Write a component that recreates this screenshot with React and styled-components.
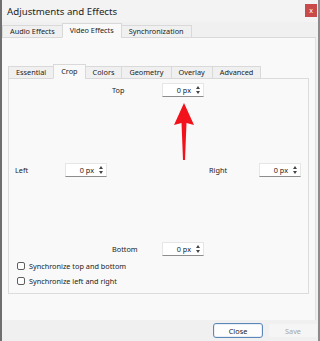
import React from "react";
import styled, { createGlobalStyle } from "styled-components";

const GlobalStyle = createGlobalStyle`
    html, body {
        margin: 0;
        padding: 0;
        background: #f0f0f0;
    }
    body {
        font-family: "Noto Sans", "Open Sans", sans-serif;
        font-size: 7.3px;
        color: #1a1a1a;
    }
`;

const Window = styled.div`
    width: 320px;
    height: 341px;
    box-sizing: border-box;
    border-left: 2px solid #6f6f6f;
    border-right: 2px solid #8c8c8c;
    background: #f0f0f0;
    display: flex;
    flex-direction: column;
    overflow: hidden;
`;

const TitleBar = styled.div`
    height: 22px;
    display: flex;
    align-items: center;
    justify-content: space-between;
    padding: 0 1px 0 5px;
    background: #f3f3f3;
    font-size: 9.7px;
    color: #1f1f1f;
`;

const CloseBox = styled.div`
    width: 12px;
    height: 13px;
    margin-top: -1px;
    background: #c94a4a;
    color: #fff;
    font-size: 7px;
    display: flex;
    align-items: center;
    justify-content: center;
`;

const TabRow = styled.div`
    display: flex;
    align-items: flex-end;
    height: ${(p) => p.$height}px;
    padding-left: ${(p) => p.$indent}px;
    position: relative;
    z-index: 1;
`;

const Tab = styled.div`
    height: ${(p) => (p.$active ? 15 : 13)}px;
    padding: 0 ${(p) => p.$pad}px 1px;
    box-sizing: border-box;
    display: flex;
    align-items: center;
    justify-content: center;
    border: 1px solid #d9d9d9;
    border-bottom: ${(p) => (p.$active ? "1px solid #f9f9f9" : "1px solid #d9d9d9")};
    margin-left: -1px;
    margin-bottom: -1px;
    background: ${(p) => (p.$active ? "#f9f9f9" : "#f0f0f0")};
    color: #222;
    white-space: nowrap;
`;

const MainPane = styled.div`
    flex: 1;
    background: #f9f9f9;
    border-top: 1px solid #d9d9d9;
    border-right: 1px solid #e2e2e2;
    margin-right: 2px;
    padding: 25px 6px 0 6px;
    display: flex;
    flex-direction: column;
`;

const InnerPane = styled.div`
    height: 216px;
    box-sizing: border-box;
    border: 1px solid #dcdcdc;
    background: #f9f9f9;
    padding: 4px 7px 0 6px;
    display: flex;
    flex-direction: column;
    position: relative;
`;

const FieldRow = styled.div`
    display: grid;
    grid-template-columns: 97px 97px 97px;
    height: 14px;
    margin-bottom: ${(p) => p.$after}px;
`;

const Field = styled.div`
    grid-column: ${(p) => p.$col};
    display: flex;
    align-items: center;
`;

const FieldLabel = styled.span`
    width: 50px;
    color: #222;
`;

const SpinBox = styled.div`
    width: 42px;
    height: 14px;
    box-sizing: border-box;
    background: #fff;
    border: 1px solid #e6e6e6;
    border-bottom: 1px solid #8d8d8d;
    display: flex;
    align-items: center;
    justify-content: flex-end;
    padding-right: 2px;
    gap: 4px;
    color: #222;
`;

const Arrows = styled.div`
    display: flex;
    flex-direction: column;
    gap: 2px;
    width: 6px;
    align-items: center;
`;

const Tri = styled.div`
    width: 0;
    height: 0;
    border-left: 2.5px solid transparent;
    border-right: 2.5px solid transparent;
    ${(p) => (p.$down ? "border-top: 3px solid #444;" : "border-bottom: 3px solid #444;")}
`;

const CheckRow = styled.label`
    display: flex;
    align-items: center;
    gap: 4px;
    height: 15px;
    padding-left: 2px;
    color: #222;
`;

const Box = styled.span`
    width: 8px;
    height: 8px;
    box-sizing: border-box;
    border: 1px solid #5e5e5e;
    border-radius: 2px;
    background: #fff;
`;

const Arrow = styled.svg`
    position: absolute;
    left: 164px;
    top: 24px;
`;

const Footer = styled.div`
    height: 21px;
    display: flex;
    justify-content: flex-end;
    align-items: center;
    gap: 5px;
    background: #f0f0f0;
`;

const Button = styled.div`
    width: 50px;
    height: 15px;
    box-sizing: border-box;
    border-radius: 3px;
    display: flex;
    align-items: center;
    justify-content: center;
    background: ${(p) => (p.$disabled ? "#f5f5f5" : "#fdfdfd")};
    border: 1px solid ${(p) => (p.$disabled ? "#f0f0f0" : "#5c87b8")};
    color: ${(p) => (p.$disabled ? "#a6a6a6" : "#1a1a1a")};
    box-shadow: ${(p) => (p.$disabled ? "none" : "inset 0 0 0 1px #e8eef6")};
`;

const Spin = () => (
    <SpinBox>
        <span>0 px</span>
        <Arrows>
            <Tri />
            <Tri $down />
        </Arrows>
    </SpinBox>
);

const mainTabs = ["Audio Effects", "Video Effects", "Synchronization"];
const innerTabs = ["Essential", "Crop", "Colors", "Geometry", "Overlay", "Advanced"];

const App = () => {
    return (
        <>
            <GlobalStyle />
            <Window>
                <TitleBar>
                    <span>Adjustments and Effects</span>
                    <CloseBox>x</CloseBox>
                </TitleBar>
                <TabRow $height={15} $indent={1}>
                    {mainTabs.map((t) => (
                        <Tab key={t} $pad={7} $active={t === "Video Effects"}>
                            {t}
                        </Tab>
                    ))}
                </TabRow>
                <MainPane>
                    <TabRow $height={15} $indent={1}>
                        {innerTabs.map((t) => (
                            <Tab key={t} $pad={7} $active={t === "Crop"}>
                                {t}
                            </Tab>
                        ))}
                    </TabRow>
                    <InnerPane>
                        <FieldRow $after={66}>
                            <Field $col={2}>
                                <FieldLabel>Top</FieldLabel>
                                <Spin />
                            </Field>
                        </FieldRow>
                        <FieldRow $after={65}>
                            <Field $col={1}>
                                <FieldLabel>Left</FieldLabel>
                                <Spin />
                            </Field>
                            <Field $col={3}>
                                <FieldLabel>Right</FieldLabel>
                                <Spin />
                            </Field>
                        </FieldRow>
                        <FieldRow $after={2}>
                            <Field $col={2}>
                                <FieldLabel>Bottom</FieldLabel>
                                <Spin />
                            </Field>
                        </FieldRow>
                        <CheckRow>
                            <Box />
                            Synchronize top and bottom
                        </CheckRow>
                        <CheckRow>
                            <Box />
                            Synchronize left and right
                        </CheckRow>
                        <Arrow width="22" height="58" viewBox="0 0 22 58">
                            <path d="M11 0 L21 22 L13.5 20 L12 57 L10 57 L8.5 20 L1 22 Z" fill="#f2121b" />
                        </Arrow>
                    </InnerPane>
                </MainPane>
                <Footer>
                    <Button>Close</Button>
                    <Button $disabled>Save</Button>
                </Footer>
            </Window>
        </>
    );
};

export default App;
